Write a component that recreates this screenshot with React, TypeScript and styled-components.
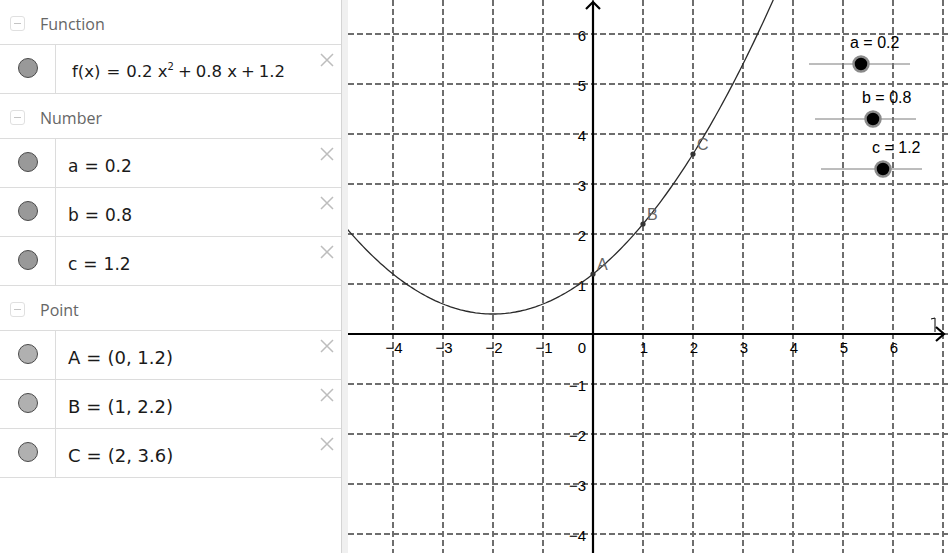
import React from "react";
import styled, { createGlobalStyle } from "styled-components";

const GlobalStyle = createGlobalStyle`
  html, body {
    margin: 0;
    padding: 0;
    background: #ffffff;
    overflow: hidden;
  }
`;

const Layout = styled.div`
  display: flex;
  width: 950px;
  height: 553px;
  overflow: hidden;
`;

const AlgebraPanel = styled.aside`
  width: 341px;
  flex-shrink: 0;
  border-right: 1px solid #d4d4d4;
  background: #ffffff;
  display: flex;
  flex-direction: column;
`;

const Splitter = styled.div`
  width: 6px;
  flex-shrink: 0;
  background: #f0f0f0;
`;

const GraphArea = styled.main`
  flex: 1;
  position: relative;
  background: #ffffff;

  svg {
    display: block;
  }
`;

const GroupHeader = styled.div`
  height: 45px;
  flex-shrink: 0;
  box-sizing: border-box;
  padding-top: 3px;
  border-bottom: 1px solid #dcdcdc;
  display: flex;
  align-items: center;
  gap: 15px;
  padding-left: 10px;
  font-family: "Open Sans", "Noto Sans", sans-serif;
  font-size: 16px;
  color: #666666;
`;

const Collapse = styled.span`
  width: 13px;
  height: 13px;
  border: 1px solid #e0e0e0;
  border-radius: 3px;
  display: flex;
  align-items: center;
  justify-content: center;

  &::after {
    content: "";
    width: 7px;
    height: 1px;
    background: #c4c4c4;
  }
`;

const Row = styled.div`
  height: 49px;
  flex-shrink: 0;
  box-sizing: border-box;
  border-bottom: 1px solid #dcdcdc;
  display: flex;
  position: relative;
`;

const MarbleCell = styled.div`
  width: 56px;
  flex-shrink: 0;
  border-right: 1px solid #dcdcdc;
  display: flex;
  justify-content: center;
  padding-top: 13px;
  box-sizing: border-box;
`;

const Marble = styled.span<{ $fill: string }>`
  width: 18px;
  height: 18px;
  border-radius: 50%;
  background: ${(p) => p.$fill};
  border: 1px solid #4a4a4a;
`;

const Definition = styled.div<{ $indent: number; $size: number }>`
  padding-top: 17px;
  padding-left: ${(p) => p.$indent}px;
  font-family: "DejaVu Sans", "Liberation Sans", sans-serif;
  font-size: ${(p) => p.$size}px;
  line-height: 20px;
  color: #1a1a1a;
  white-space: nowrap;

  sup {
    font-size: 10px;
    vertical-align: 7px;
    line-height: 0;
  }
`;

const Eq = styled.span`
  margin: 0 6px;
`;

const Op = styled.span`
  margin: 0 4px;
`;

const Close = styled.span`
  position: absolute;
  top: 8px;
  right: 7px;
  width: 14px;
  height: 14px;

  svg {
    display: block;
  }
`;

const CloseIcon = () => (
  <Close>
    <svg width="14" height="14" viewBox="0 0 14 14">
      <path d="M1 1 L13 13 M13 1 L1 13" stroke="#bdbdbd" strokeWidth="1.5" />
    </svg>
  </Close>
);

type Item = { key: string; fill: string; indent?: number; size?: number; content: React.ReactNode };

const groups: { title: string; items: Item[] }[] = [
  {
    title: "Function",
    items: [
      {
        key: "f",
        fill: "#999999",
        indent: 16,
        size: 16.5,
        content: (
          <>
            f(x)<Eq>=</Eq>0.2 x<sup>2</sup>
            <Op>+</Op>0.8 x<Op>+</Op>1.2
          </>
        ),
      },
    ],
  },
  {
    title: "Number",
    items: [
      { key: "a", fill: "#999999", content: <>a<Eq>=</Eq>0.2</> },
      { key: "b", fill: "#999999", content: <>b<Eq>=</Eq>0.8</> },
      { key: "c", fill: "#999999", content: <>c<Eq>=</Eq>1.2</> },
    ],
  },
  {
    title: "Point",
    items: [
      { key: "A", fill: "#b0b0b0", size: 18, content: <>A<Eq>=</Eq>(0, 1.2)</> },
      { key: "B", fill: "#b0b0b0", size: 18, content: <>B<Eq>=</Eq>(1, 2.2)</> },
      { key: "C", fill: "#b0b0b0", size: 18, content: <>C<Eq>=</Eq>(2, 3.6)</> },
    ],
  },
];

// graph coordinates (page pixels): origin at 593,334, 50px per unit
const OX = 593;
const OY = 334;
const U = 50;
const px = (x: number) => OX + x * U;
const py = (y: number) => OY - y * U;
const f = (x: number) => 0.2 * x * x + 0.8 * x + 1.2;

const curvePath = () => {
  const pts: string[] = [];
  for (let x = -5; x <= 3.7; x += 0.05) {
    pts.push(`${px(x).toFixed(1)},${py(f(x)).toFixed(1)}`);
  }
  return "M" + pts.join(" L");
};

const sliders = [
  { label: "a = 0.2", lx: 850, ly: 48, x1: 809, x2: 910, y: 64, px: 861 },
  { label: "b = 0.8", lx: 862, ly: 103, x1: 815, x2: 916, y: 119, px: 873 },
  { label: "c = 1.2", lx: 872, ly: 153, x1: 821, x2: 922, y: 169, px: 883 },
];

const points = [
  { name: "A", x: 0, y: 1.2 },
  { name: "B", x: 1, y: 2.2 },
  { name: "C", x: 2, y: 3.6 },
];

const Graph = () => {
  const vx = [-4, -3, -2, -1, 0, 1, 2, 3, 4, 5, 6, 7];
  const hy = [6, 5, 4, 3, 2, 1, 0, -1, -2, -3, -4];
  const label = (n: number) => (n < 0 ? `\u2212${-n}` : `${n}`);
  return (
    <svg width="602" height="553" viewBox="348 0 602 553" fontFamily="'Liberation Sans', Arial, sans-serif">
      <g stroke="#6e6e6e" strokeWidth="2" strokeDasharray="6 3">
        {vx.map((x) => (
          <line key={`v${x}`} x1={px(x)} y1={0} x2={px(x)} y2={553} />
        ))}
        {hy.map((y) => (
          <line key={`h${y}`} x1={348} y1={py(y)} x2={950} y2={py(y)} />
        ))}
      </g>

      <g stroke="#000" strokeWidth="2.2" fill="none">
        <line x1={348} y1={OY} x2={944} y2={OY} />
        <line x1={OX} y1={553} x2={OX} y2={2} />
        <path d="M936 327 L944 334 L936 341" />
        <path d="M586 9 L593 2 L600 9" />
      </g>
      <path d="M931 319 L935 318 L935 332" stroke="#000" strokeWidth="1" fill="none" />

      <g fontSize="15" fill="#000">
        {[-4, -3, -2, -1, 1, 2, 3, 4, 5, 6].map((x) => (
          <text key={`xl${x}`} x={px(x) + 1} y={353} textAnchor="middle">
            {label(x)}
          </text>
        ))}
        <text x={586} y={353} textAnchor="end">0</text>
        {[6, 5, 4, 3, 2, 1, -1, -2, -3, -4].map((y) => (
          <text key={`yl${y}`} x={586} y={py(y) + 7} textAnchor="end">
            {label(y)}
          </text>
        ))}
      </g>

      <path d={curvePath()} stroke="#2b2b2b" strokeWidth="1.3" fill="none" />

      {points.map((p) => (
        <g key={p.name}>
          <circle cx={px(p.x)} cy={py(p.y)} r="2.6" fill="#333" />
          <text x={px(p.x) + 4} y={py(p.y) - 4} fontSize="16" fill="#666">
            {p.name}
          </text>
        </g>
      ))}

      {sliders.map((s) => (
        <g key={s.label}>
          <line x1={s.x1} y1={s.y} x2={s.x2} y2={s.y} stroke="#7a7a7a" strokeWidth="1" />
          <circle cx={s.px} cy={s.y} r="7.5" fill="#000" stroke="#8a8a8a" strokeWidth="2.5" />
          <text x={s.lx} y={s.ly} fontSize="16" fill="#000">
            {s.label}
          </text>
        </g>
      ))}
    </svg>
  );
};

export default function App() {
  return (
    <>
      <GlobalStyle />
      <Layout>
        <AlgebraPanel>
          {groups.map((g) => (
            <React.Fragment key={g.title}>
              <GroupHeader>
                <Collapse />
                {g.title}
              </GroupHeader>
              {g.items.map((it) => (
                <Row key={it.key}>
                  <MarbleCell>
                    <Marble $fill={it.fill} />
                  </MarbleCell>
                  <Definition $indent={it.indent ?? 12} $size={it.size ?? 17}>
                    {it.content}
                  </Definition>
                  <CloseIcon />
                </Row>
              ))}
            </React.Fragment>
          ))}
        </AlgebraPanel>
        <Splitter />
        <GraphArea>
          <Graph />
        </GraphArea>
      </Layout>
    </>
  );
}
